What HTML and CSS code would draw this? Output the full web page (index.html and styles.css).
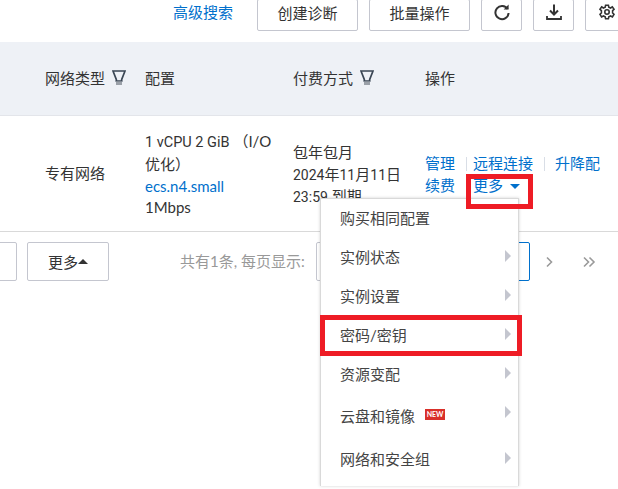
FILE: index.html
```html
<!DOCTYPE html>
<html lang="zh">
<head>
<meta charset="utf-8">
<title>实例列表</title>
<link rel="stylesheet" href="styles.css">
</head>
<body>
<div class="page">
  <div class="toolbar">
    <a class="adv">高级搜索</a>
    <button class="btn wide">创建诊断</button>
    <button class="btn wide">批量操作</button>
    <button class="btn icon"><svg width="18" height="18" viewBox="0 0 18 18" fill="none" stroke="#333" stroke-width="2"><path d="M14.6 6A6.6 6.6 0 1 0 15.6 10"/><path d="M15.6 1.6V6.6H10.6Z" fill="#333" stroke="none"/></svg></button>
    <button class="btn icon"><svg width="18" height="18" viewBox="0 0 18 18" fill="none" stroke="#333" stroke-width="2"><path d="M9 1.5V11M5 7.5L9 11.5L13 7.5"/><path d="M2 13V16H16V13" stroke-width="1.8"/></svg></button>
    <button class="btn icon"><svg width="16" height="16" viewBox="0 0 16 16" fill="none" stroke="#333" stroke-width="1.6"><path d="M6.6 1.2H9.4L9.8 3.2L11.6 4L13.3 2.9L15 5.3L13.6 6.7V8.9L15 10.3L13.4 12.9L11.6 12L9.8 12.8L9.4 14.8H6.6L6.2 12.8L4.4 12L2.6 12.9L1 10.3L2.4 8.9V6.7L1 5.3L2.7 2.9L4.4 4L6.2 3.2Z"/><circle cx="8" cy="8" r="2.2"/></svg></button>
  </div>

  <div class="table-head">
    <div class="th">网络类型<svg class="filter" width="14" height="16" viewBox="0 0 14 16"><path d="M1 1H13L9.7 9.5V11H4.3V9.5Z" fill="none" stroke="#3a4654" stroke-width="1.7"/><rect x="4" y="11.5" width="6" height="3.5" fill="#9aa0a8"/></svg></div>
    <div class="th">配置</div>
    <div class="th">付费方式<svg class="filter" width="14" height="16" viewBox="0 0 14 16"><path d="M1 1H13L9.7 9.5V11H4.3V9.5Z" fill="none" stroke="#3a4654" stroke-width="1.7"/><rect x="4" y="11.5" width="6" height="3.5" fill="#9aa0a8"/></svg></div>
    <div class="th">操作</div>
  </div>

  <div class="table-row">
    <div class="cell network">专有网络</div>
    <div class="cell config">
      <div class="spec"><span class="num">1 vCPU 2 GiB</span> （I/O优化）</div>
      <a class="link">ecs.n4.small</a>
      <div>1Mbps</div>
    </div>
    <div class="cell pay">
      <div>包年包月</div>
      <div><span class="num">2024</span>年<span class="num">11</span>月<span class="num">11</span>日</div>
      <div><span class="num">23:59</span> 到期</div>
    </div>
    <div class="cell actions">
      <div class="act-line"><a class="link">管理</a><span class="sep"></span><a class="link">远程连接</a><span class="sep wide-sep"></span><a class="link">升降配</a></div>
      <div class="act-line"><a class="link">续费</a><span class="sep"></span><a class="link">更多<span class="caret"></span></a></div>
    </div>
  </div>

  <div class="footer">
    <button class="pager-btn stub"></button>
    <button class="pager-btn more">更多<span class="up"></span></button>
    <span class="total">共有1条, 每页显示:</span>
    <span class="select"></span>
    <span class="current"></span>
    <svg class="nav next" width="8" height="12" viewBox="0 0 8 12" fill="none" stroke="#9a9a9a" stroke-width="1.6"><path d="M2 1.5L6.5 6L2 10.5"/></svg>
    <svg class="nav last" width="14" height="12" viewBox="0 0 14 12" fill="none" stroke="#9a9a9a" stroke-width="1.6"><path d="M2 1.5L6.5 6L2 10.5M7.5 1.5L12 6L7.5 10.5"/></svg>
  </div>

  <ul class="menu">
    <li>购买相同配置</li>
    <li class="sub">实例状态</li>
    <li class="sub">实例设置</li>
    <li class="sub">密码/密钥</li>
    <li class="sub">资源变配</li>
    <li class="sub cloud">云盘和镜像<span class="new">NEW</span></li>
    <li class="sub">网络和安全组</li>
  </ul>
  <div class="mark mark-more"></div>
  <div class="mark mark-key"></div>
</div>
</body>
</html>
```
FILE: styles.css
```css
* { box-sizing: border-box; }
html, body { margin: 0; padding: 0; background: #fff; }
body { font-family: Lato, "Noto Sans CJK SC", sans-serif; font-size: 15px; color: #333; }
.page { position: relative; width: 618px; height: 489px; overflow: hidden; }
.toolbar { height: 42px; display: flex; align-items: flex-start; gap: 11px; padding-left: 173px; width: 660px; }
.adv { color: #0070cc; line-height: 25px; width: 73px; flex: none; }
.btn { height: 32px; margin-top: -1px; background: #fff; border: 1px solid #c4c6cf; border-radius: 2px; font: inherit; color: #333; display: flex; align-items: center; justify-content: center; padding: 0 0 6px; flex: none; }
.btn.wide { width: 101px; }
.btn.icon { width: 41px; }
.btn.icon:last-child { width: 60px; justify-content: flex-start; padding-left: 13px; }
.table-head { height: 74px; background: #eef1f6; border-bottom: 1px solid #e3e5ea; display: grid; grid-template-columns: 100px 148px 132px 1fr; padding-left: 45px; align-items: center; }
.th { color: #333; display: flex; align-items: center; gap: 7px; height: 24px; margin-top: -2px; }
.table-row { height: 116px; border-bottom: 1px solid #d9d9d9; display: grid; grid-template-columns: 100px 148px 132px 1fr; padding-left: 45px; align-items: center; line-height: 21.7px; }
.config { padding-top: 3px; }
.pay { padding-top: 4px; }
.actions { padding-top: 2px; }
.num { font-family: Roboto, sans-serif; font-size: 14px; }
.spec { width: 135px; }
.spec .num { font-size: 14.5px; }
.link { color: #0070cc; display: block; }
.act-line { display: flex; align-items: center; width: 190px; height: 21.7px; }
.act-line .link { flex: none; }
.sep { width: 1px; height: 14px; background: #d9dee6; margin: 0 6px 0 11px; flex: none; }
.sep.wide-sep { margin: 0 10px 0 11px; }
.caret { display: inline-block; width: 0; height: 0; border: 5px solid transparent; border-top: 5px solid #0070cc; border-bottom: 0; margin-left: 7px; vertical-align: 2px; }
.footer { position: relative; height: 60px; display: flex; align-items: flex-start; padding-top: 10px; width: 660px; }
.pager-btn { height: 39px; background: #fff; border: 1px solid #c4c6cf; border-radius: 2px; font: inherit; color: #333; padding: 0; flex: none; }
.stub { width: 40px; margin-left: -23px; }
.more { width: 82px; margin-left: 10px; display: flex; align-items: center; justify-content: center; }
.up { display: inline-block; width: 0; height: 0; border: 5px solid transparent; border-bottom: 5px solid #333; border-top: 0; }
.total { color: #999; line-height: 39px; margin-left: 71px; width: 136px; flex: none; white-space: nowrap; }
.select { width: 40px; height: 39px; border: 1px solid #c4c6cf; border-radius: 2px; flex: none; }
.current { width: 173px; height: 39px; border: 1px solid #0070cc; border-radius: 2px; margin-left: 1px; flex: none; }
.nav { flex: none; margin-top: 14px; }
.next { margin-left: 15px; }
.last { margin-left: 29px; }
.menu { position: absolute; left: 320px; top: 198px; width: 199px; height: 288px; margin: 0; padding: 0; list-style: none; background: #fff; border: 1px solid #d9d9d9; border-bottom: 0; box-shadow: 0 0 3px rgba(0,0,0,.18); color: #444; }
.menu li { position: relative; height: 39px; line-height: 38px; padding-left: 19px; }
.menu li.cloud { height: 46px; line-height: 45px; }
.menu li.sub::after { content: ""; position: absolute; right: 7px; top: 12px; border: 6px solid transparent; border-left: 6px solid #c4c6cf; border-right: 0; }
.new { display: inline-block; margin-left: 10px; width: 20px; height: 11px; line-height: 11px; background: #d9302a; color: #fff; font-size: 7px; font-weight: bold; text-align: center; vertical-align: 5px; }
.mark { position: absolute; border: 5px solid #ee1c25; }
.mark-more { left: 466px; top: 174px; width: 67px; height: 35px; }
.mark-key { left: 320px; top: 315px; width: 202px; height: 41px; }
```
